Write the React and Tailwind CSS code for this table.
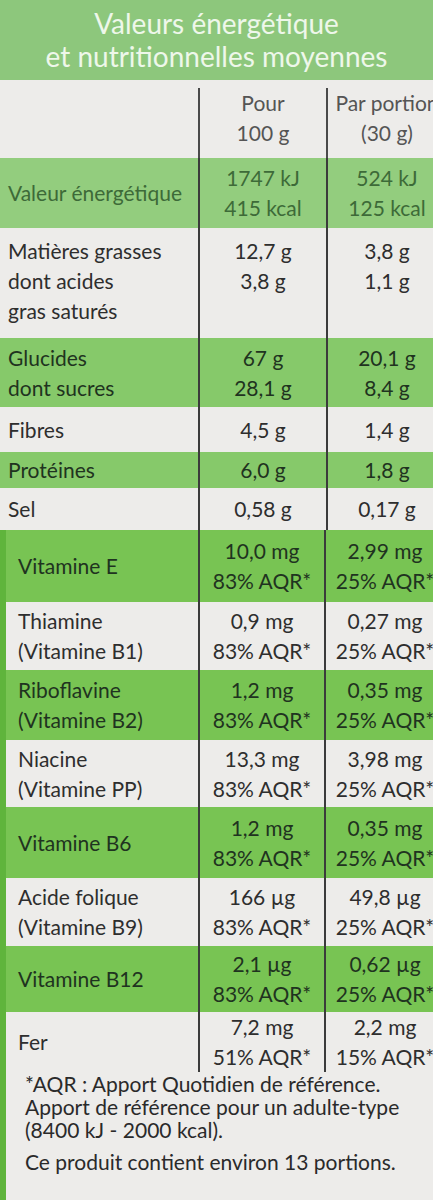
const GREEN = 'bg-[#93cd7e]'
const GREEN_V = 'bg-[#78c453]'

const topRows = [
  {
    label: ['Valeur énergétique'],
    a: ['1747 kJ', '415 kcal'],
    b: ['524 kJ', '125 kcal'],
    green: true,
    soft: true,
    h: 'h-[70px]',
  },
  {
    label: ['Matières grasses', 'dont acides', 'gras saturés'],
    a: ['12,7 g', '3,8 g'],
    b: ['3,8 g', '1,1 g'],
    h: 'h-[110px]',
    top: true,
  },
  { label: ['Glucides', 'dont sucres'], a: ['67 g', '28,1 g'], b: ['20,1 g', '8,4 g'], green: true, h: 'h-[69px]' },
  { label: ['Fibres'], a: ['4,5 g'], b: ['1,4 g'], h: 'h-[45px]' },
  { label: ['Protéines'], a: ['6,0 g'], b: ['1,8 g'], green: true, h: 'h-[36px]' },
  { label: ['Sel'], a: ['0,58 g'], b: ['0,17 g'], h: 'h-[42px]' },
]

const vitRows = [
  { label: ['Vitamine E'], a: ['10,0 mg', '83% AQR*'], b: ['2,99 mg', '25% AQR*'], green: true, h: 'h-[72px]' },
  { label: ['Thiamine', '(Vitamine B1)'], a: ['0,9 mg', '83% AQR*'], b: ['0,27 mg', '25% AQR*'], h: 'h-[68px]' },
  { label: ['Riboflavine', '(Vitamine B2)'], a: ['1,2 mg', '83% AQR*'], b: ['0,35 mg', '25% AQR*'], green: true, h: 'h-[70px]' },
  { label: ['Niacine', '(Vitamine PP)'], a: ['13,3 mg', '83% AQR*'], b: ['3,98 mg', '25% AQR*'], h: 'h-[67px]' },
  { label: ['Vitamine B6'], a: ['1,2 mg', '83% AQR*'], b: ['0,35 mg', '25% AQR*'], green: true, h: 'h-[71px]' },
  { label: ['Acide folique', '(Vitamine B9)'], a: ['166 µg', '83% AQR*'], b: ['49,8 µg', '25% AQR*'], h: 'h-[68px]' },
  { label: ['Vitamine B12'], a: ['2,1 µg', '83% AQR*'], b: ['0,62 µg', '25% AQR*'], green: true, h: 'h-[66px]' },
  { label: ['Fer'], a: ['7,2 mg', '51% AQR*'], b: ['2,2 mg', '15% AQR*'], h: 'h-[50px]' },
]

function Row({ row, vit }) {
  const bg = row.green ? (row.soft ? GREEN : vit ? GREEN_V : 'bg-[#86c96a]') : 'bg-[#edecea]'
  const ink = row.soft ? 'text-[#3d6a38]' : row.green ? 'text-[#1f3320]' : 'text-[#2e2e2e]'
  const align = row.top ? 'justify-start pt-[8px]' : 'justify-center'
  return (
    <div className={`grid ${vit ? 'grid-cols-[192px_126px_120px]' : 'grid-cols-[198px_128px_120px]'} ${row.h} ${bg} ${ink}`}>
      <div className={`flex flex-col ${align} ${vit ? 'pl-[12px]' : 'pl-[8px]'} leading-[30px]`}>
        {row.label.map((l) => (
          <span key={l} className="whitespace-nowrap">{l}</span>
        ))}
      </div>
      <div className={`flex flex-col items-center ${align} border-l-2 border-[#3b3b3b] leading-[30px]`}>
        {row.a.map((l) => (
          <span key={l} className="whitespace-nowrap">{l}</span>
        ))}
      </div>
      <div className={`flex flex-col items-center ${align} border-l-2 border-[#3b3b3b] leading-[30px]`}>
        {row.b.map((l) => (
          <span key={l} className="whitespace-nowrap">{l}</span>
        ))}
      </div>
    </div>
  )
}

export default function App() {
  return (
    <div className="h-[1200px] w-[433px] overflow-hidden bg-[#edecea] font-['Lato',sans-serif] text-[21px]">
      <div className="flex h-[80px] flex-col items-center justify-center bg-[#8dc77c] text-[28px] leading-[33px] text-[#eef7ea]">
        <span>Valeurs énergétique</span>
        <span>et nutritionnelles moyennes</span>
      </div>

      <div className="grid h-[78px] grid-cols-[198px_128px_120px] pt-[8px] text-[#555]">
        <div />
        <div className="flex flex-col items-center border-l-2 border-[#4a4a4a] leading-[30px]">
          <span>Pour</span>
          <span>100 g</span>
        </div>
        <div className="flex flex-col items-center border-l-2 border-[#4a4a4a] leading-[30px]">
          <span className="whitespace-nowrap">Par portion</span>
          <span>(30 g)</span>
        </div>
      </div>

      {topRows.map((r) => (
        <Row key={r.label[0]} row={r} />
      ))}

      <div className="border-l-[6px] border-[#5fb43c]">
        {vitRows.map((r) => (
          <Row key={r.label[0]} row={r} vit />
        ))}

        <div className="pl-[19px] pr-[4px] pt-[10px] pb-[40px] text-[21px] leading-[23px] text-[#2a2a2a]">
          <p className="whitespace-nowrap">*AQR : Apport Quotidien de référence.</p>
          <p className="whitespace-nowrap">Apport de référence pour un adulte-type</p>
          <p>(8400 kJ - 2000 kcal).</p>
          <p className="mt-[9px] whitespace-nowrap">Ce produit contient environ 13 portions.</p>
        </div>
      </div>
    </div>
  )
}
